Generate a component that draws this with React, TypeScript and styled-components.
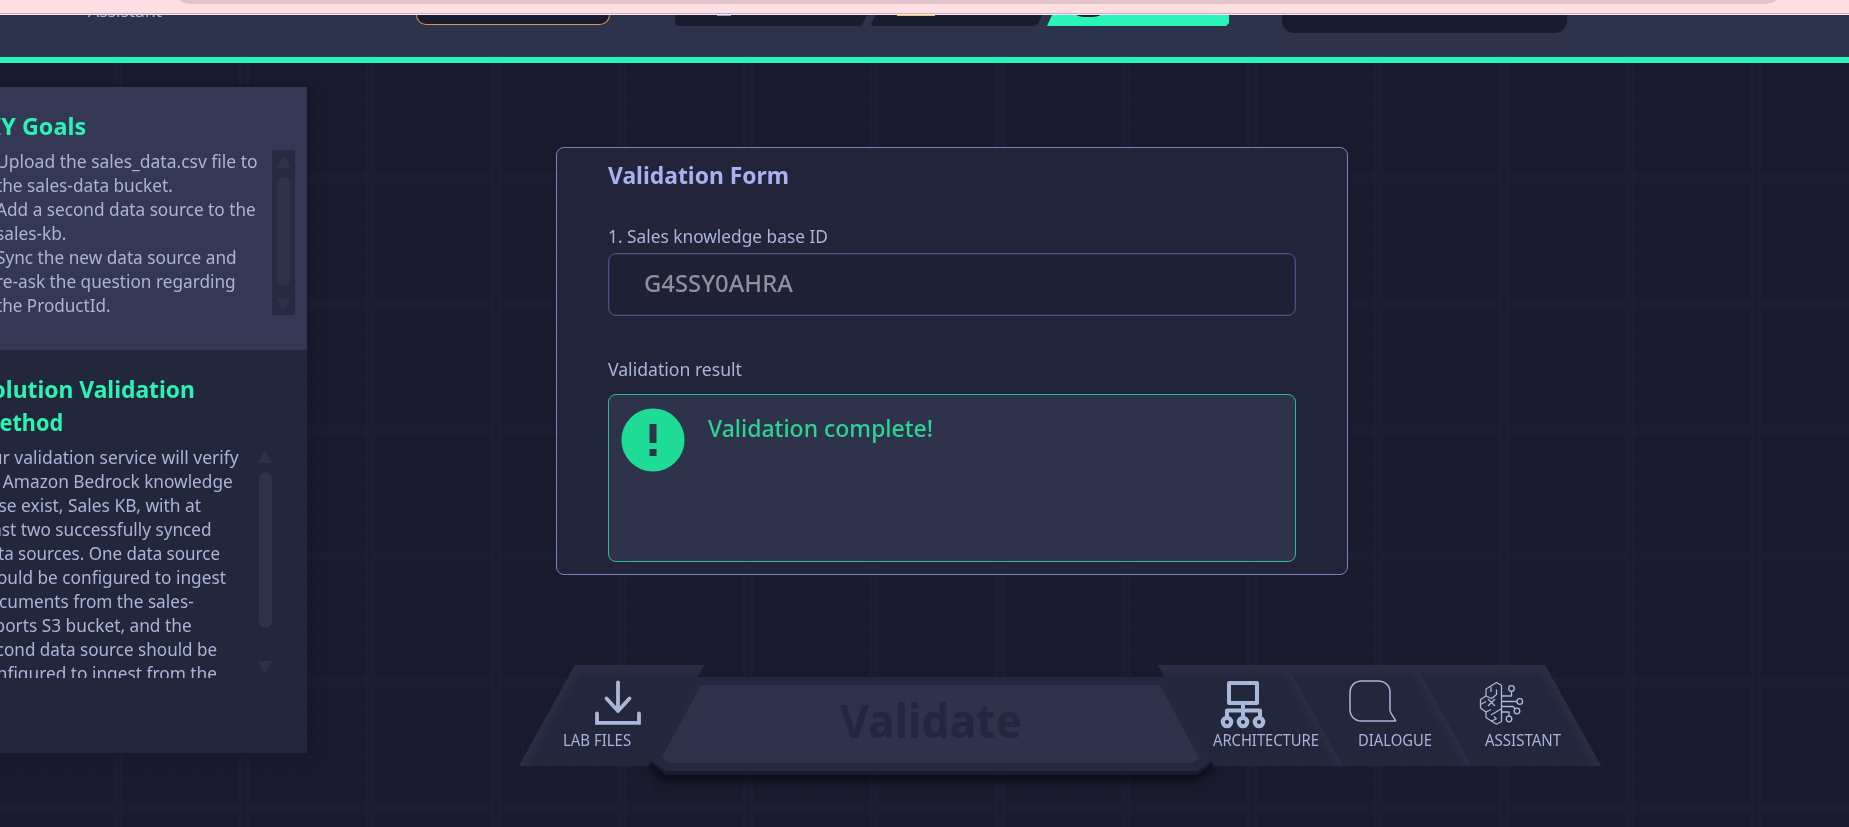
import React, { useLayoutEffect, useRef, useState } from "react";
import styled, { createGlobalStyle } from "styled-components";

const font = '"Noto Sans", "Open Sans", sans-serif';

const GlobalStyle = createGlobalStyle`
  * { box-sizing: border-box; }
  html, body { margin: 0; overflow: hidden; background: #191b2d; }
  body { font-family: ${font}; color: #a8b4d8; }
  h2, h3, p { margin: 0; font: inherit; }
`;

/* ---------- text ---------- */

const Run = styled.span`
  display: block;
  width: max-content;
  white-space: nowrap;
  transform-origin: 0 50%;
`;

/* A single line condensed or widened to the given measure. */
function FitLine({ width, children }: { width: number; children: React.ReactNode }) {
  const ref = useRef<HTMLSpanElement>(null);
  const [scale, setScale] = useState(1);
  useLayoutEffect(() => {
    if (ref.current) setScale(width / ref.current.offsetWidth);
  }, [width]);
  return (
    <Run ref={ref} style={{ transform: `scaleX(${scale})` }}>
      {children}
    </Run>
  );
}

/* ---------- page ---------- */

const gridLines = (band: string, dir: string) => `linear-gradient(${dir},
  ${band} 0 3px, #1a1c30 3px 7px, ${band} 7px 10px,
  transparent 10px 31px, #1b1e30 31px 32px,
  transparent 32px 55px, #1b1e30 55px 56px,
  transparent 56px 79px, #1b1e30 79px 80px,
  transparent 80px 103px, #1b1e30 103px 104px,
  transparent 104px)`;

const Page = styled.div`
  width: 1849px;
  height: 827px;
  overflow: hidden;
  display: flex;
  flex-direction: column;
  background-color: #191b2d;
  background-image: ${gridLines("#1c1e32", "90deg")}, ${gridLines("#1b1d31", "180deg")};
  background-size: 126px 126px;
  background-position: 113px 47px;
`;

const BrowserStrip = styled.div`
  flex: none;
  height: 15px;
  padding: 0 73px 0 180px;
  background: #ffdfe4;
  border-bottom: 1px solid #f8eef4;
  box-shadow: inset 0 -1px 0 #c9abc0;
`;

const AddressBar = styled.div`
  height: 4px;
  background: #dfc5c9;
  border-radius: 0 0 14px 14px / 0 0 4px 4px;
`;

const Header = styled.header`
  flex: none;
  display: flex;
  align-items: flex-start;
  height: 48px;
  background: #2e334c;
  border-bottom: 6px solid #29f3b7;
  box-shadow: inset 0 -1px 0 #214450;
`;

const HeaderTitle = styled.div`
  width: 328px;
  height: 3px;
  margin-left: 88px;
  overflow: hidden;
  display: flex;
  align-items: flex-end;
  font-size: 17px;
  line-height: 14px;
  color: #a9aede;
`;

const Status = styled.div`
  width: 194px;
  height: 10px;
  background: #191c2c;
  border: 1px solid #dc9150;
  border-top: 0;
  border-radius: 0 0 12px 12px;
`;

const Steps = styled.div`
  display: flex;
  margin-left: 65px;
`;

const Step = styled.div<{ $w: number; $ml?: number; $shape: string; $on?: boolean }>`
  width: ${(p) => p.$w}px;
  height: 11px;
  margin-left: ${(p) => p.$ml ?? 0}px;
  background: ${(p) => (p.$on ? "#29f5b8" : "#191c2c")};
  clip-path: ${(p) => p.$shape};
`;

const StepMark = styled.div<{ $x: number; $w: number; $h: number; $c: string; $round?: boolean }>`
  width: ${(p) => p.$w}px;
  height: ${(p) => p.$h}px;
  margin-left: ${(p) => p.$x}px;
  background: ${(p) => p.$c};
  border-radius: ${(p) => (p.$round ? "0 0 50% 50% / 0 0 100% 100%" : "0")};
`;

const Timer = styled.div`
  width: 285px;
  height: 18px;
  margin-left: 53px;
  background: #191c2e;
  border-radius: 0 0 12px 12px;
`;

const Main = styled.main`
  flex: 1;
  display: flex;
  align-items: flex-start;
`;

/* ---------- side panel ---------- */

const Side = styled.aside`
  width: 307px;
  height: 666px;
  margin-top: 24px;
  display: flex;
  flex-direction: column;
  box-shadow: 4px 4px 14px rgba(15, 17, 30, 0.3);
`;

const Goals = styled.section`
  height: 263px;
  padding: 22px 12px 0 0;
  background: #343855;
`;

const Method = styled.section`
  flex: 1;
  padding: 22px 35px 0 0;
  background: #23273c;
`;

const SideTitle = styled.h2<{ $indent: number }>`
  margin-left: ${(p) => -p.$indent}px;
  font-size: 24px;
  line-height: 33px;
  font-weight: 700;
  color: #2bf3b4;
`;

const Scroller = styled.div<{ $h: number; $top: number }>`
  display: flex;
  justify-content: space-between;
  height: ${(p) => p.$h}px;
  margin-top: ${(p) => p.$top}px;
`;

const Lines = styled.div<{ $indent: number }>`
  margin-left: ${(p) => -p.$indent}px;
  overflow: hidden;
  flex: 1;
  font-size: 18px;
  line-height: 24px;
  color: #a8b5d8;
`;

const Track = styled.div<{ $w: number; $pad: string; $bg: string; $top?: number }>`
  flex: none;
  width: ${(p) => p.$w}px;
  margin-top: ${(p) => p.$top ?? 0}px;
  padding: ${(p) => p.$pad};
  display: flex;
  flex-direction: column;
  align-items: center;
  background: ${(p) => p.$bg};
`;

const Arrow = styled.div<{ $down?: boolean }>`
  flex: none;
  width: 14px;
  height: 11px;
  background: #2d314c;
  clip-path: ${(p) =>
    p.$down
      ? "polygon(0 0, 100% 0, 62% 90%, 50% 100%, 38% 90%)"
      : "polygon(0 100%, 100% 100%, 62% 10%, 50% 0, 38% 10%)"};
`;

const Thumb = styled.div<{ $h: number; $after: number }>`
  flex: none;
  width: 13px;
  height: ${(p) => p.$h}px;
  margin: 9px 0 ${(p) => p.$after}px;
  border-radius: 7px;
  background: #2e324b;
`;

/* ---------- validation form ---------- */

const Workspace = styled.div`
  width: 1090px;
  margin-left: 212px;
  display: flex;
  flex-direction: column;
`;

const Form = styled.form`
  width: 792px;
  height: 428px;
  margin: 84px 0 0 37px;
  padding: 9px 51px 0;
  background: rgba(36, 38, 60, 0.86);
  border: 1px solid #7982ba;
  border-radius: 8px;
`;

const FormTitle = styled.h2`
  font-size: 24px;
  line-height: 36px;
  font-weight: 700;
  color: #a9b2f0;
`;

const Label = styled.p<{ $top: number }>`
  margin-top: ${(p) => p.$top}px;
  font-size: 18px;
  line-height: 24px;
  color: #a9b5d8;
`;

const Field = styled.div`
  height: 63px;
  margin-top: 5px;
  padding: 12px 35px;
  background: #1e2033;
  border: 1px solid #4c507e;
  box-shadow: inset 0 0 0 0.5px #3b3f68;
  border-radius: 8px;
  font-size: 24px;
  line-height: 33px;
  font-weight: 500;
  color: #8e909d;
`;

const Result = styled.div`
  height: 168px;
  margin-top: 13px;
  padding: 13px 12px;
  display: flex;
  gap: 23px;
  background: #2e324b;
  border: 1px solid #31b98d;
  border-radius: 8px;
  font-size: 24px;
  line-height: 39px;
  font-weight: 500;
  color: #2ad592;
`;

/* ---------- bottom bar ---------- */

const Dock = styled.nav`
  display: flex;
  align-items: flex-start;
  margin-top: 90px;
`;

const DockButton = styled.div<{ $right?: boolean }>`
  position: relative;
  z-index: 1;
  flex: none;
  width: 185px;
  height: 101px;
  background-color: #23273c;
  background-image: linear-gradient(180deg, #2a2d43 0, #2a2d43 3px, rgba(42, 45, 67, 0) 12px),
    linear-gradient(${(p) => (p.$right ? "241deg" : "119deg")}, #2a2d43 50px, #23273c 60px);
  clip-path: ${(p) =>
    p.$right
      ? "polygon(0 0, calc(100% - 56px) 0, 100% 100%, 56px 100%)"
      : "polygon(56px 0, 100% 0, calc(100% - 56px) 100%, 0 100%)"};
`;

const DockGroup = styled.div`
  display: flex;
  margin-left: -54px;
  & > * + * { margin-left: -56px; }
`;

const DockInner = styled.div<{ $icon: number; $text: number }>`
  display: flex;
  flex-direction: column;
  & > svg { margin: 13px 0 0 ${(p) => p.$icon}px; }
  & > p { margin: -1px 0 0 ${(p) => p.$text}px; }
`;

const DockLabel = styled.p`
  font-size: 15.6px;
  line-height: 22px;
  color: #a8b4dc;
`;

const ValidateShadow = styled.div`
  flex: none;
  width: 561px;
  margin: 12px 0 0 -53px;
  filter: drop-shadow(0 6px 5px rgba(8, 9, 16, 0.85));
`;

const ValidateEdge = styled.div`
  height: 98px;
  background: linear-gradient(180deg, #24283e 80px, #191b2e 80px);
  clip-path: polygon(45px 0, 516px 0, 561px 83px, 561px 86px, 547px 98px, 14px 98px, 0 86px, 0 83px);
`;

const ValidateFrame = styled.div`
  height: 94px;
  padding: 8px 11px;
  background: #24283e;
  clip-path: polygon(45px 0, 516px 0, 561px 83px, 547px 94px, 14px 94px, 0 83px);
`;

const ValidateButton = styled.div`
  height: 78px;
  display: flex;
  justify-content: center;
  background: #2e324b;
  clip-path: polygon(39px 0, 498px 0, 537px 73px, 531px 78px, 7px 78px, 0 72px);
  font-size: 47px;
  line-height: 71px;
  font-weight: 700;
  color: #23263e;
`;

const ValidateText = styled.div`
  width: 184px;
`;

const ink = "#a9b7d9";

function DownloadIcon() {
  return (
    <svg width="48" height="52" viewBox="0 0 48 52" fill="none" stroke={ink} strokeWidth="3.8" strokeLinecap="round" strokeLinejoin="round">
      <path d="M24 4.5V33M12.500 20.500 24 33 35.500 20.500" />
      <path d="M3 35.500V44.800H45V35.500" strokeLinejoin="miter" />
    </svg>
  );
}

function ArchitectureIcon() {
  return (
    <svg width="48" height="52" viewBox="0 0 48 52" fill="none" stroke={ink} strokeWidth="4" strokeLinejoin="round">
      <path d="M9 5H37V25H9ZM23 25V40M7 40V32.500H40V40" />
      <g strokeWidth="4.200">
        <circle cx="7" cy="44" r="4.200" />
        <circle cx="23" cy="44" r="4.200" />
        <circle cx="39" cy="44" r="4.200" />
      </g>
    </svg>
  );
}

function DialogueIcon() {
  return (
    <svg width="48" height="52" viewBox="0 0 48 52" fill="none" stroke={ink} strokeWidth="1.500" strokeLinejoin="round">
      <path d="M13 3H29C36.500 3 41 8 41 14.500V32.500C41.500 36 45.500 39.500 46.700 43H12.500C5.500 43 1 38 1 31.500V15C1 8 5.500 3 13 3Z" />
    </svg>
  );
}

function AssistantIcon() {
  return (
    <svg width="48" height="52" viewBox="0 0 48 52" fill="none" stroke={ink} strokeWidth="1.300" strokeLinejoin="round">
      <path d="M22.500 7.500 17.500 4.500 7 11V18L1.500 21.500V30L7 34V39.500L17.500 46.200 22.500 43.500V7.500" />
      <path d="M7 18 12.500 20.500 17 17M12 9V14M17.500 11.500V17M1.500 26.500 7 23.500M7 34 12 31.500M9 21 12.500 24.500 16 21M9 28 12.500 24.500 16 28M12 37 22 31M12 43 17.500 41M17.500 41 15 38.500" />
      <path d="M22.500 18H32.500V13.500M22.500 23.500H38M22.500 28.500H34L36.500 31M22.500 34H30V38" />
      <circle cx="32.500" cy="10.500" r="2.800" />
      <circle cx="40.800" cy="23.500" r="2.800" />
      <circle cx="38" cy="33" r="2.800" />
      <circle cx="30" cy="41" r="2.800" />
    </svg>
  );
}

function AlertIcon() {
  return (
    <svg width="64" height="64" viewBox="0 0 64 64">
      <circle cx="32" cy="32" r="31.600" fill="#1edb96" />
      <path d="M28.500 16H35.500V35H28.500ZM28.500 41H35.500V48H28.500Z" fill="#2e324b" />
    </svg>
  );
}

const goals: [string, number][] = [
  ["Upload the sales_data.csv file to", 262],
  ["the sales-data bucket.", 177],
  ["Add a second data source to the", 260],
  ["sales-kb.", 70],
  ["Sync the new data source and", 241],
  ["re-ask the question regarding", 240],
  ["the ProductId.", 115],
];

const method: [string, number][] = [
  ["Our validation service will verify", 261],
  ["an Amazon Bedrock knowledge", 255],
  ["base exist, Sales KB, with at", 223],
  ["least two successfully synced", 234],
  ["data sources. One data source", 242],
  ["should be configured to ingest", 248],
  ["documents from the sales-", 216],
  ["reports S3 bucket, and the", 214],
  ["second data source should be", 239],
  ["configured to ingest from the", 239],
];

export default function App() {
  return (
    <Page>
      <GlobalStyle />
      <BrowserStrip>
        <AddressBar />
      </BrowserStrip>
      <Header>
        <HeaderTitle>
          <FitLine width={74}>Assistant</FitLine>
        </HeaderTitle>
        <Status />
        <Steps>
          <Step $w={192} $shape="polygon(0 0, 100% 0, 97.500% 90%, 96% 100%, 2px 100%, 0 9px)">
            <StepMark $x={42} $w={14} $h={1} $c="#8791db" />
          </Step>
          <Step $w={171} $ml={4} $shape="polygon(5px 0, 100% 0, 167px 9px, 164px 11px, 1px 11px, 0 9px)">
            <StepMark $x={26} $w={38} $h={1} $c="#f0c56c" />
          </Step>
          <Step $w={182} $ml={5} $on $shape="polygon(5px 0, 100% 0, 182px 8px, 179px 11px, 0 11px)">
            <StepMark $x={30} $w={23} $h={2} $c="#191c2c" $round />
          </Step>
        </Steps>
        <Timer />
      </Header>
      <Main>
        <Side>
          <Goals>
            <SideTitle $indent={25}>
              <FitLine width={111}>DIY Goals</FitLine>
            </SideTitle>
            <Scroller $h={166} $top={7}>
              <Lines $indent={4}>
                {goals.map(([text, width]) => (
                  <FitLine key={text} width={width}>{text}</FitLine>
                ))}
              </Lines>
              <Track $w={23} $top={1} $pad="7px 0 0" $bg="#272b41">
                <Arrow />
                <Thumb $h={109} $after={13} />
                <Arrow $down />
              </Track>
            </Scroller>
          </Goals>
          <Method>
            <SideTitle $indent={21}>
              <FitLine width={216}>Solution Validation</FitLine>
              <FitLine width={84}>Method</FitLine>
            </SideTitle>
            <Scroller $h={233} $top={7}>
              <Lines $indent={22}>
                {method.map(([text, width]) => (
                  <FitLine key={text} width={width}>{text}</FitLine>
                ))}
              </Lines>
              <Track $w={14} $pad="7px 0 0" $bg="transparent">
                <Arrow />
                <Thumb $h={156} $after={33} />
                <Arrow $down />
              </Track>
            </Scroller>
          </Method>
        </Side>
        <Workspace>
          <Form>
            <FormTitle>
              <FitLine width={181}>Validation Form</FitLine>
            </FormTitle>
            <Label $top={31}>
              <FitLine width={220}>1. Sales knowledge base ID</FitLine>
            </Label>
            <Field>
              <FitLine width={149}>G4SSY0AHRA</FitLine>
            </Field>
            <Label $top={41}>
              <FitLine width={134}>Validation result</FitLine>
            </Label>
            <Result>
              <AlertIcon />
              <FitLine width={225}>Validation complete!</FitLine>
            </Result>
          </Form>
          <Dock>
            <DockButton>
              <DockInner $icon={75} $text={44}>
                <DownloadIcon />
                <DockLabel>
                  <FitLine width={68}>LAB FILES</FitLine>
                </DockLabel>
              </DockInner>
            </DockButton>
            <ValidateShadow>
              <ValidateEdge>
                <ValidateFrame>
                  <ValidateButton>
                    <ValidateText>
                      <FitLine width={182}>Validate</FitLine>
                    </ValidateText>
                  </ValidateButton>
                </ValidateFrame>
              </ValidateEdge>
            </ValidateShadow>
            <DockGroup>
              <DockButton $right>
                <DockInner $icon={62} $text={55}>
                  <ArchitectureIcon />
                  <DockLabel>
                    <FitLine width={106}>ARCHITECTURE</FitLine>
                  </DockLabel>
                </DockInner>
              </DockButton>
              <DockButton $right>
                <DockInner $icon={62} $text={71}>
                  <DialogueIcon />
                  <DockLabel>
                    <FitLine width={74}>DIALOGUE</FitLine>
                  </DockLabel>
                </DockInner>
              </DockButton>
              <DockButton $right>
                <DockInner $icon={63} $text={69}>
                  <AssistantIcon />
                  <DockLabel>
                    <FitLine width={76}>ASSISTANT</FitLine>
                  </DockLabel>
                </DockInner>
              </DockButton>
            </DockGroup>
          </Dock>
        </Workspace>
      </Main>
    </Page>
  );
}
